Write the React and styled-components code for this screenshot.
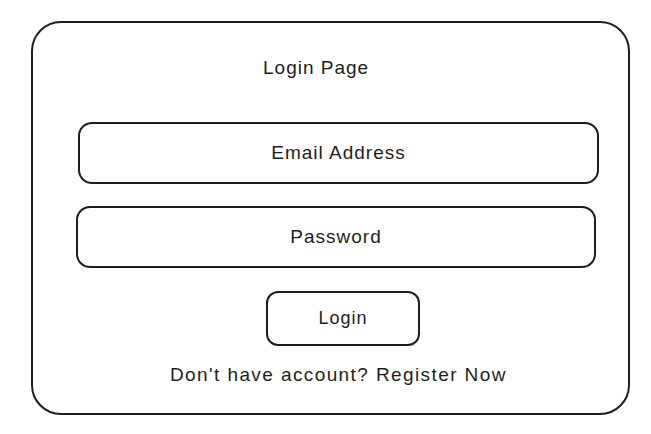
import React from 'react';
import styled, {createGlobalStyle} from 'styled-components';

const GlobalStyle = createGlobalStyle`
  html, body {
    margin: 0;
    padding: 0;
    background: #fff;
  }
  body {
    font-family: "Liberation Sans", Arial, sans-serif;
    color: #1e1e1e;
    letter-spacing: 1px;
  }
`;

const Page = styled.div`
  width: 651px;
  height: 434px;
  padding: 21px 0 0 31px;
  box-sizing: border-box;
`;

const Frame = styled.div`
  width: 599px;
  height: 394px;
  box-sizing: border-box;
  border: 2px solid #1e1e1e;
  border-radius: 30px;
  display: flex;
  flex-direction: column;
  align-items: flex-start;
`;

const Title = styled.div`
  margin: 33px 0 0 ${p => p.offset}px;
  font-size: 19px;
  line-height: 24px;
`;

const Field = styled.div`
  margin: ${p => p.top}px 0 0 ${p => p.offset}px;
  width: ${p => p.width}px;
  height: 62px;
  box-sizing: border-box;
  border: 2px solid #1e1e1e;
  border-radius: 14px;
  display: flex;
  align-items: center;
  justify-content: center;
  font-size: 19px;
`;

const Button = styled.div`
  margin: 23px 0 0 ${p => p.offset}px;
  width: 154px;
  height: 55px;
  box-sizing: border-box;
  border: 2px solid #1e1e1e;
  border-radius: 12px;
  display: flex;
  align-items: center;
  justify-content: center;
  font-size: 18px;
`;

const Footer = styled.div`
  margin: 17px 0 0 ${p => p.offset}px;
  font-size: 19px;
  line-height: 24px;
  letter-spacing: 1.4px;
`;

export default function App() {
  return (
    <>
      <GlobalStyle />
      <Page>
        <Frame>
          <Title offset={230}>Login Page</Title>
          <Field top={42} offset={45} width={521}>Email Address</Field>
          <Field top={22} offset={43} width={520}>Password</Field>
          <Button offset={233}>Login</Button>
          <Footer offset={137}>Don't have account? Register Now</Footer>
        </Frame>
      </Page>
    </>
  );
}
